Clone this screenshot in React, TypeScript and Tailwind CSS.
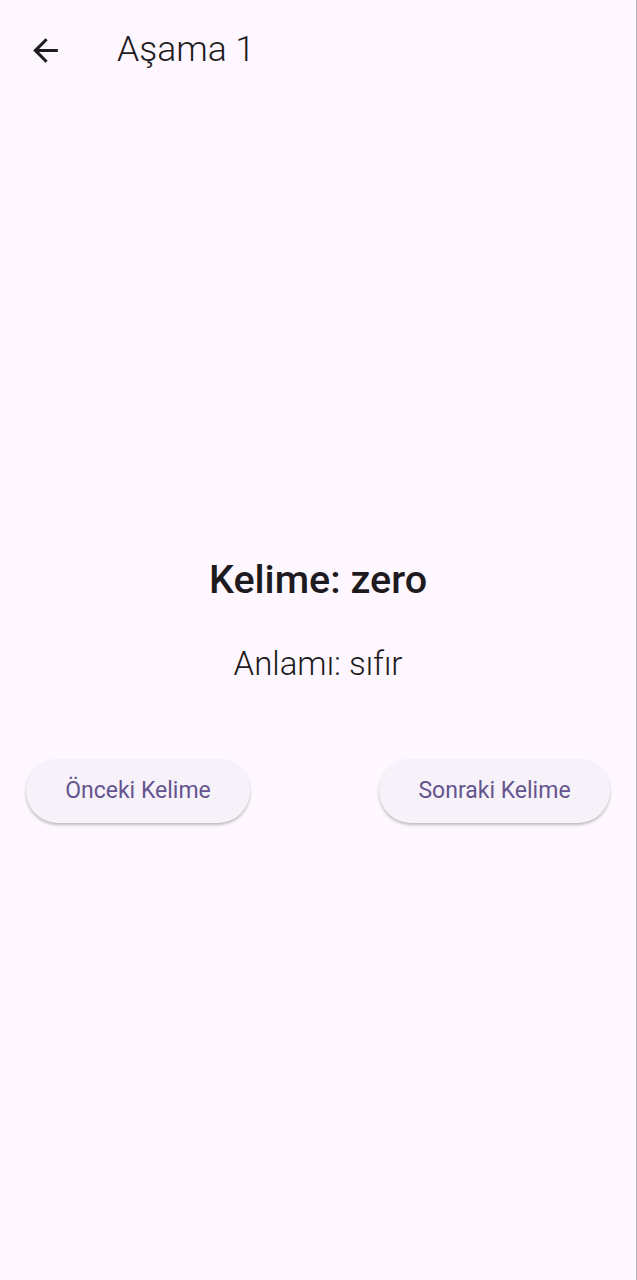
import React from 'react';

const WordScreen = () => {
	return (
		<div className="min-h-[1280px] w-full bg-[#fef7ff] border-r border-[#b8b3ba] flex flex-col" style={{ fontFamily: 'Roboto, "Noto Sans", sans-serif' }}>
			<div className="flex items-center h-[100px] px-[25px]">
				<button className="w-[40px] h-[40px] flex items-center justify-center text-[#1d1b20]">
					<svg width="37" height="37" viewBox="0 0 24 24" fill="currentColor">
						<path d="M20 11H7.83l5.59-5.59L12 4l-8 8 8 8 1.41-1.41L7.83 13H20v-2z"/>
					</svg>
				</button>
				<h1 className="ml-[52px] text-[35.5px] text-[#1d1b20] font-light">Aşama 1</h1>
			</div>
			<div className="flex flex-col items-center pt-[452px]">
				<p className="text-[39.5px] font-medium text-[#1d1b20] leading-[56px]">Kelime: zero</p>
				<p className="mt-[34px] text-[33px] font-light text-[#1d1b20] leading-[44px]">Anlamı: sıfır</p>
			</div>
			<div className="flex justify-between px-[26px] mt-[73px]">
				<button className="h-[64px] w-[224px] rounded-full bg-[#f7f2fa] text-[#65558f] text-[23px] font-normal shadow-[0_2px_3px_rgba(0,0,0,0.25)]">Önceki Kelime</button>
				<button className="h-[64px] w-[231px] rounded-full bg-[#f7f2fa] text-[#65558f] text-[23px] font-normal shadow-[0_2px_3px_rgba(0,0,0,0.25)]">Sonraki Kelime</button>
			</div>
		</div>
	);
};

export default function App() {
	return <WordScreen />;
}
